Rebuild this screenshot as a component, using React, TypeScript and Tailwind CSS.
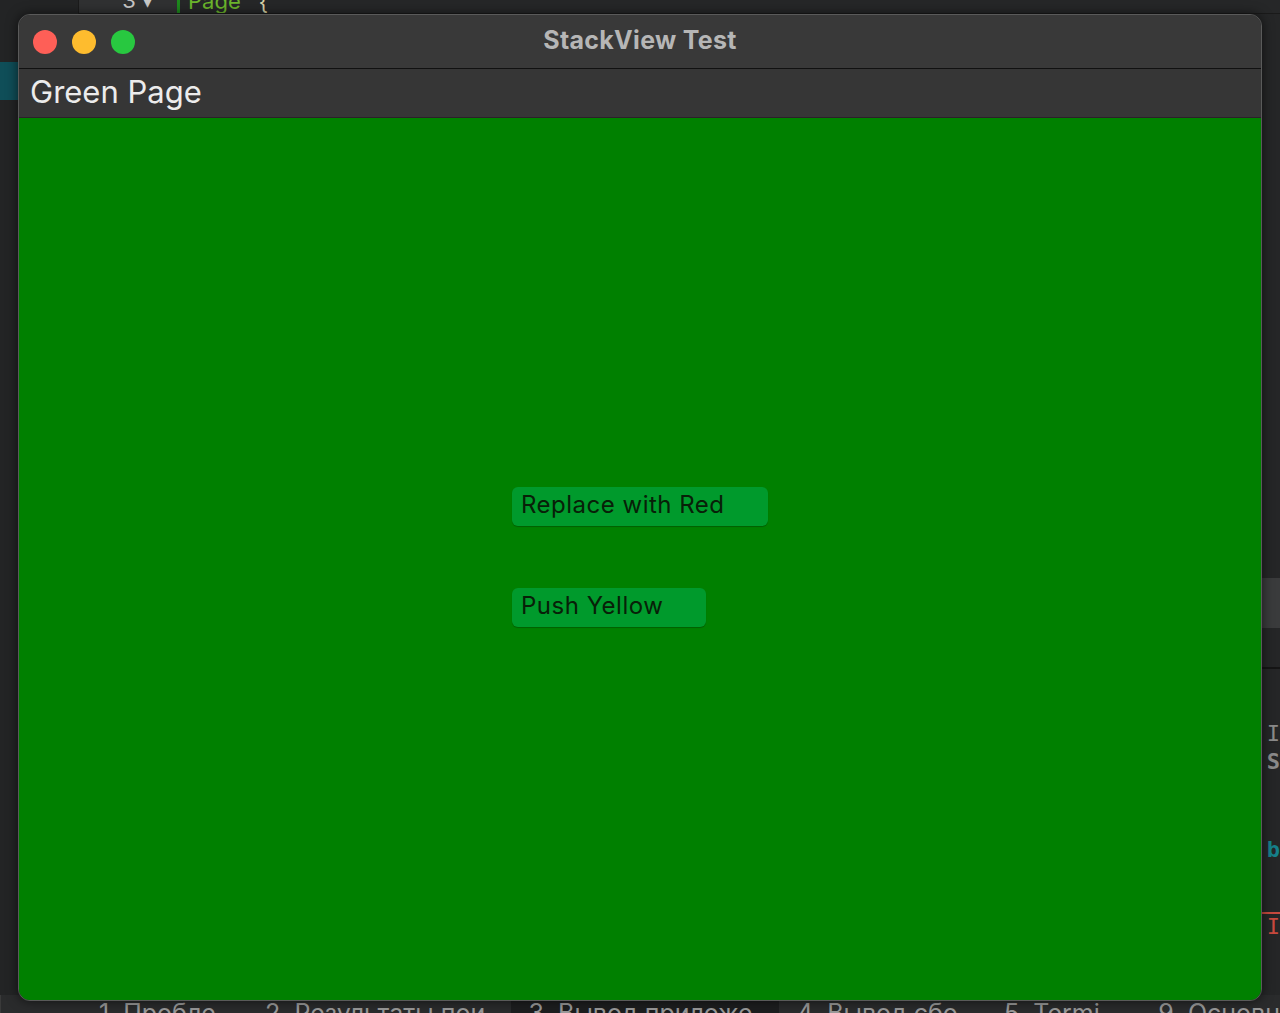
import React from "react";

const tabs = [
  { label: "1  Пробле", x: "w-[170px]", active: false },
  { label: "2  Результаты пои", x: "w-[270px]", active: false },
  { label: "3  Вывод приложе", x: "w-[275px]", active: true },
  { label: "4  Вывод сбо", x: "w-[212px]", active: false },
  { label: "5  Termi", x: "w-[158px]", active: false },
  { label: "9  Основн", x: "w-[140px]", active: false },
];

export default function App() {
  return (
    <div
      className="relative w-[1280px] h-[1013px] overflow-hidden bg-[#252627]"
      style={{ fontFamily: "Inter, 'Noto Sans', sans-serif" }}
    >
      {/* IDE behind the window */}
      <div className="absolute left-0 top-0 w-[79px] h-[1013px] bg-[#232425] border-r border-[#1b1b1b]" />
      <div className="absolute left-0 top-[62px] w-[18px] h-[38px] bg-[#0f4e58]" />
      <div className="absolute left-[79px] top-0 w-[1201px] h-[14px] bg-[#262728] border-b border-[#1a1a1a] flex items-end text-[22px] leading-none">
        <div className="w-[98px] h-[14px] bg-[#303132] flex items-end justify-end pr-[24px] text-[#c8c8c8] overflow-hidden">
          <span className="translate-y-[-2px]">3 ▾</span>
        </div>
        <div className="w-[3px] h-[14px] bg-[#1d8a1d]" />
        <span className="ml-[8px] text-[#6cb62c] overflow-hidden h-[14px] flex items-end">
          <span className="translate-y-[-1px]">Page</span>
          <span className="ml-[18px] text-[#d7d3a8]">{"{"}</span>
        </span>
      </div>
      <div className="absolute right-0 top-[578px] w-[30px] h-[50px] bg-[#3a3b3c]" />
      <div className="absolute right-0 top-[667px] w-[30px] h-[2px] bg-[#151515]" />
      <div className="absolute right-0 top-[720px] w-[20px] text-right text-[22px] leading-[28px] text-[#8a8a8a]" style={{ fontFamily: "'DejaVu Sans Mono', monospace" }}>
        <div>I</div>
        <div className="font-bold">S</div>
      </div>
      <div className="absolute right-0 top-[833px] w-[20px] text-right text-[22px] font-bold text-[#16808a]" style={{ fontFamily: "'DejaVu Sans Mono', monospace" }}>
        b
      </div>
      <div className="absolute right-0 top-[912px] w-[20px] text-right text-[22px] text-[#c84a3e] border-t-2 border-[#c84a3e] leading-[26px]" style={{ fontFamily: "'DejaVu Sans Mono', monospace" }}>
        I
      </div>
      <div className="absolute left-0 top-[995px] w-[1280px] h-[18px] flex bg-[#2a2b2c] text-[25px] text-[#9a9a9a] overflow-hidden pl-[80px] border-l border-[#3a3a3a]">
        {tabs.map((t) => (
          <div
            key={t.label}
            className={`${t.x} h-[18px] pl-[18px] whitespace-pre leading-[36px] ${
              t.active ? "bg-[#1d1e1f]" : ""
            }`}
          >
            {t.label}
          </div>
        ))}
      </div>

      {/* App window */}
      <div className="absolute left-[18px] top-[14px] w-[1244px] h-[987px] rounded-[12px] overflow-hidden flex flex-col border border-[#5a5a5a] shadow-[0_0_12px_rgba(0,0,0,0.6)]">
        <div className="relative h-[54px] bg-[#393939] border-b border-[#111] flex items-center pl-[14px] gap-[15px]">
          <span className="w-[24px] h-[24px] rounded-full bg-[#fe5f57]" />
          <span className="w-[24px] h-[24px] rounded-full bg-[#febc2e]" />
          <span className="w-[24px] h-[24px] rounded-full bg-[#28c840]" />
          <div className="absolute inset-0 flex items-center justify-center text-[25px] font-bold text-[#b6b6b6] tracking-[0.3px] pb-[2px]">
            StackView Test
          </div>
        </div>
        <div className="h-[49px] bg-[#363636] border-b border-[#2d1f2a] flex items-center pl-[11px] pb-[2px] text-[31px] text-[#ececec]">
          Green Page
        </div>
        <div className="flex-1 bg-[#008000] flex flex-col items-center pt-[369px]">
          <div className="w-[256px] flex flex-col gap-[62px]">
            <button className="w-[256px] h-[39px] rounded-[6px] bg-[#009a2c] shadow-[0_1px_1px_rgba(0,0,0,0.25)] text-left pl-[9px] text-[24px] tracking-[0.5px] text-[#082008] leading-none pb-[4px]">
              Replace with Red
            </button>
            <button className="w-[194px] h-[39px] rounded-[6px] bg-[#009a2c] shadow-[0_1px_1px_rgba(0,0,0,0.25)] text-left pl-[9px] text-[24px] tracking-[0.5px] text-[#082008] leading-none pb-[4px]">
              Push Yellow
            </button>
          </div>
        </div>
      </div>
    </div>
  );
}
